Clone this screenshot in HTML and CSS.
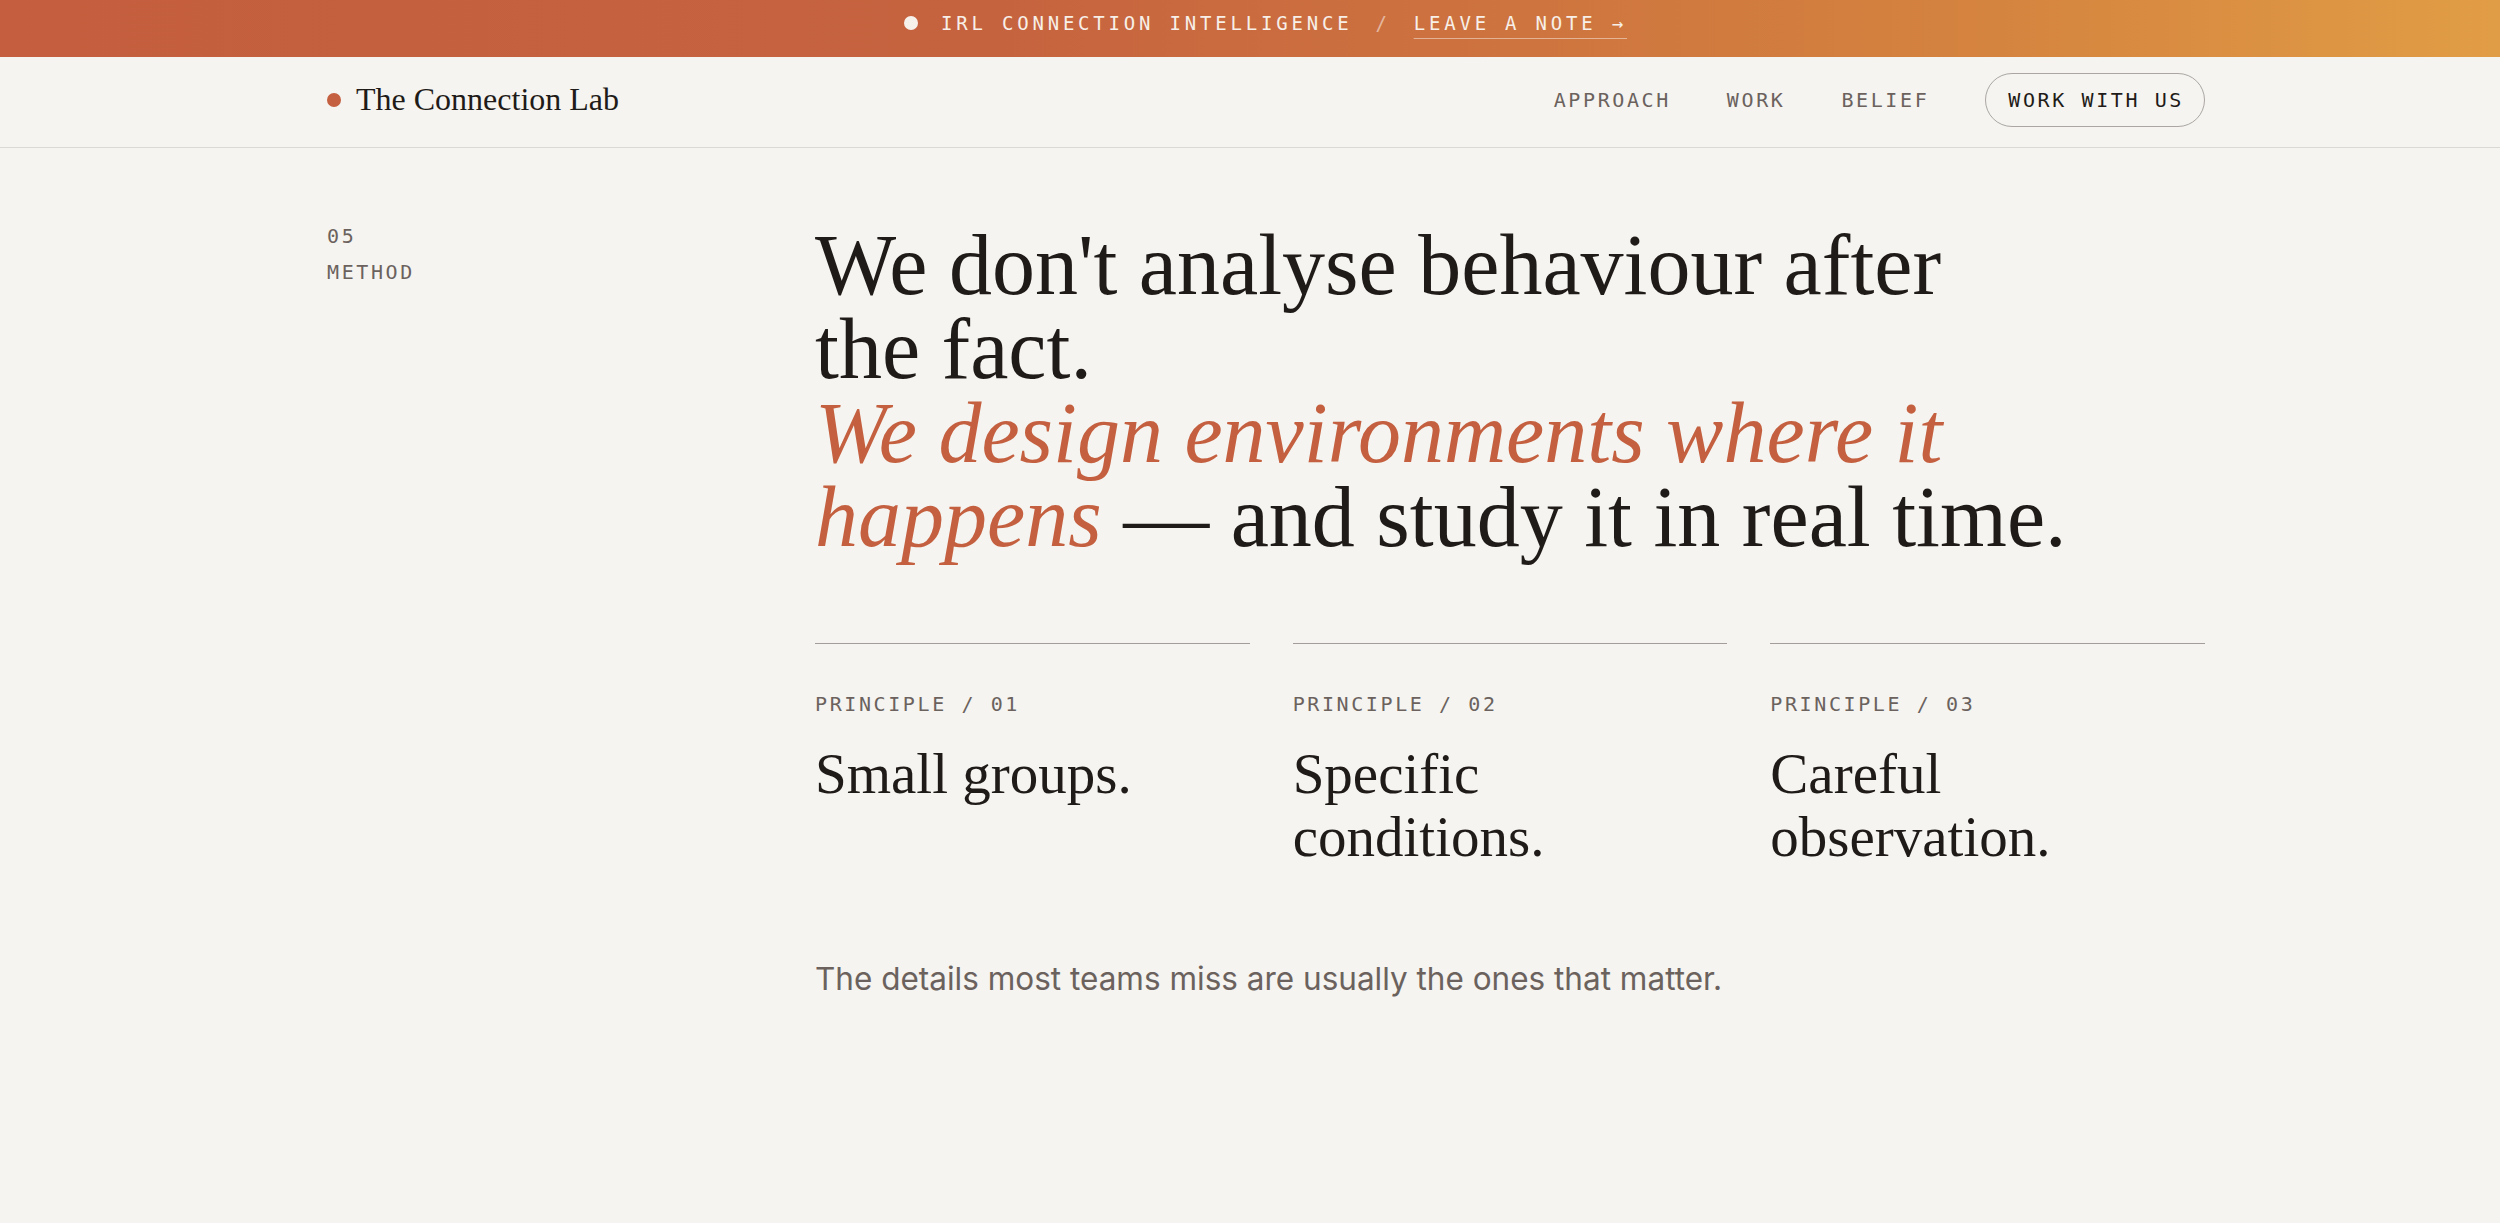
FILE: index.html
```html
<!DOCTYPE html>
<html lang="en">
<head>
    <meta charset="UTF-8">
    <meta name="viewport" content="width=device-width, initial-scale=1.0">
    <title>The Connection Lab — Method</title>
    <link rel="stylesheet" href="styles.css">
</head>
<body>
    <!-- Announcement strip -->
    <div class="topbar">
        <div class="topbar-inner">
            <span class="topbar-dot"></span>
            <span class="topbar-label">IRL CONNECTION INTELLIGENCE</span>
            <span class="topbar-sep">/</span>
            <a class="topbar-link" href="#note">LEAVE A NOTE →</a>
        </div>
    </div>

    <header class="site-header">
        <a class="logo" href="#">
            <span class="logo-dot"></span>
            <span class="logo-name">The Connection Lab</span>
        </a>
        <nav class="nav">
            <a href="#approach">APPROACH</a>
            <a href="#work">WORK</a>
            <a href="#belief">BELIEF</a>
            <a class="nav-button" href="#contact">WORK WITH US</a>
        </nav>
    </header>

    <section class="method" id="method">
        <div class="section-label">
            <span>05</span>
            <span>METHOD</span>
        </div>

        <div class="method-body">
            <!-- keep "the fact." together so it never leaves a lone word -->
            <h2 class="method-title">
                We don't analyse behaviour after the&nbsp;fact.<br>
                <em>We design environments where it happens</em> — and study it in real time.
            </h2>

            <div class="principles">
                <div class="principle">
                    <div class="principle-num">PRINCIPLE / 01</div>
                    <h3>Small groups.</h3>
                </div>
                <div class="principle">
                    <div class="principle-num">PRINCIPLE / 02</div>
                    <h3>Specific conditions.</h3>
                </div>
                <div class="principle">
                    <div class="principle-num">PRINCIPLE / 03</div>
                    <h3>Careful observation.</h3>
                </div>
            </div>

            <p class="method-note">The details most teams miss are usually the ones that matter.</p>
        </div>
    </section>
</body>
</html>
```

FILE: styles.css
```css
/* Base */
body {
  margin: 0;
  background-color: #f5f4f0;
  color: #1f1b18;
  font-family: "Liberation Serif", serif;
}

a {
  color: inherit;
  text-decoration: none;
}

/* Announcement strip */
.topbar {
  height: 57px;
  box-sizing: border-box;
  padding-bottom: 11px;
  display: flex;
  align-items: center;
  justify-content: center;
  background: linear-gradient(90deg, #c45e3e 0%, #c6633f 40%, #d5843f 80%, #e19d45 100%);
  color: #f7efe8;
  font-family: "DejaVu Sans Mono", monospace;
  font-size: 19px;
  letter-spacing: 0.2em;
}

.topbar-inner {
  display: flex;
  align-items: center;
  gap: 23px;
  padding-left: 31px;
  line-height: 24px;
}

.topbar-dot {
  width: 14px;
  height: 14px;
  border-radius: 50%;
  background-color: #f7f1ec;
}

.topbar-sep {
  color: rgba(255, 255, 255, 0.5);
}

.topbar-link {
  text-decoration: underline;
  text-decoration-thickness: 1px;
  text-underline-offset: 8px;
  text-decoration-color: rgba(255, 255, 255, 0.45);
}

/* Header */
.site-header {
  height: 91px;
  box-sizing: border-box;
  padding: 0 295px 5px 327px;
  display: flex;
  align-items: center;
  justify-content: space-between;
  border-bottom: 1px solid #dcd9d4;
}

.logo {
  display: flex;
  align-items: center;
  gap: 15px;
}

.logo-dot {
  width: 14px;
  height: 14px;
  border-radius: 50%;
  background-color: #c4603f;
}

.logo-name {
  font-size: 32px;
  color: #1f1b18;
}

.nav {
  display: flex;
  align-items: center;
  gap: 56px;
  font-family: "DejaVu Sans Mono", monospace;
  font-size: 20px;
  letter-spacing: 2.6px;
  color: #6b625e;
}

.nav-button {
  padding: 14px 20px 14px 22px;
  border: 1.5px solid #aba6a1;
  border-radius: 999px;
  color: #1f1b18;
}

/* Method section */
.method {
  display: grid;
  grid-template-columns: 488px 1fr;
  padding: 70px 295px 120px 327px;
}

.section-label {
  display: flex;
  flex-direction: column;
  font-family: "DejaVu Sans Mono", monospace;
  font-size: 20px;
  line-height: 36px;
  letter-spacing: 2.6px;
  color: #6b625e;
}

.method-title {
  margin: 5px 0 0 0;
  max-width: 1262px;
  font-size: 86px;
  font-weight: normal;
  line-height: 84px;
  color: #1f1b18;
}

.method-title em {
  color: #c4603f;
}

.principles {
  display: grid;
  grid-template-columns: repeat(3, 1fr);
  gap: 43px;
  margin-top: 84px;
}

.principle {
  border-top: 1px solid #a39e99;
  padding-top: 48px;
}

.principle-num {
  font-family: "DejaVu Sans Mono", monospace;
  font-size: 20px;
  line-height: 24px;
  letter-spacing: 2.6px;
  color: #6b625e;
}

.principle h3 {
  margin: 26px 0 0 0;
  font-size: 57px;
  font-weight: normal;
  line-height: 63px;
}

.method-note {
  margin: 87px 0 0 0;
  font-family: "Inter", sans-serif;
  font-size: 31.5px;
  line-height: 1.5;
  color: #6b625e;
}
```
